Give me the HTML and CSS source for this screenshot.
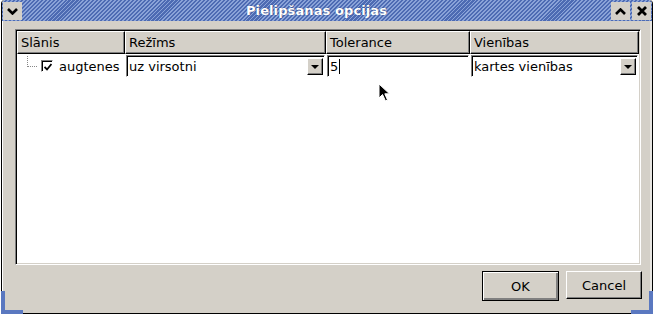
FILE: index.html
```html
<!DOCTYPE html>
<html>
  <head>
    <meta charset="utf-8" />
    <title>Pielipšanas opcijas</title>
    <link rel="stylesheet" href="styles.css">
  </head>

  <body>
    <div class="window">
      <div class="titlebar">
        <div class="tb-button">
          <svg width="11" height="7" viewBox="0 0 11 7"><path d="M1 1 L5.5 5.5 L10 1" fill="none" stroke="#000" stroke-width="2.6"/></svg>
        </div>
        <div class="title">Pielipšanas opcijas</div>
        <div class="tb-button">
          <svg width="11" height="7" viewBox="0 0 11 7"><path d="M1 6 L5.5 1.5 L10 6" fill="none" stroke="#000" stroke-width="2.6"/></svg>
        </div>
        <div class="tb-button">
          <svg width="10" height="10" viewBox="0 0 10 10"><path d="M1 1 L9 9 M9 1 L1 9" fill="none" stroke="#000" stroke-width="2.8"/></svg>
        </div>
      </div>

      <div class="content">
        <div class="table">
          <div class="header">
            <div class="hcell">Slānis</div>
            <div class="hcell">Režīms</div>
            <div class="hcell">Tolerance</div>
            <div class="hcell">Vienības</div>
          </div>
          <div class="row">
            <div class="cell layer">
              <span class="tree"></span>
              <span class="checkbox">
                <svg width="8" height="8" viewBox="0 0 8 8"><path d="M0.5 4 L3 6.5 L7.5 1" fill="none" stroke="#000" stroke-width="1.8"/></svg>
              </span>
              <span class="layer-name">augtenes</span>
            </div>
            <div class="cell">
              <div class="combo">
                <span class="combo-text">uz virsotni</span>
                <span class="drop"><span class="arrow"></span></span>
              </div>
            </div>
            <div class="cell">
              <div class="edit"><span>5</span><span class="caret"></span></div>
            </div>
            <div class="cell">
              <div class="combo">
                <span class="combo-text">kartes vienības</span>
                <span class="drop"><span class="arrow"></span></span>
              </div>
            </div>
          </div>
        </div>

        <div class="buttons">
          <button class="button default">OK</button>
          <button class="button">Cancel</button>
        </div>
      </div>

      <span class="corner corner-left"></span>
      <span class="corner corner-right"></span>
    </div>

    <svg class="pointer" width="14" height="20" viewBox="0 0 14 20">
      <path d="M1 1 L1 15 L4.5 11.5 L7.5 18 L9.5 17 L6.8 10.8 L11.5 10.8 Z" fill="#000" stroke="#fff" stroke-width="1"/>
    </svg>
  </body>
</html>
```

FILE: styles.css
```css
body {
  margin: 0;
  background-color: white;
  font-family: "DejaVu Sans", Verdana, sans-serif;
  font-size: 13px;
  color: black;
}

.window {
  position: relative;
  margin-left: 1px;
  width: 650px;
  height: 313px;
  border: 1px solid #000;
  border-top: none;
  border-radius: 4px 4px 0 0;
  background-color: #d4d0c8;
  display: flex;
  flex-direction: column;
  box-shadow: inset 1px 0 #fff, inset -2px 0 #e8e6e2;
}

.titlebar {
  height: 21px;
  display: flex;
  align-items: center;
  padding: 0 1px 0 1px;
  border-radius: 4px 4px 0 0;
  background-color: #5b79bf;
  background-image: repeating-linear-gradient(
    -45deg,
    #4d6bb3 0px,
    #4d6bb3 1.5px,
    #8aa3d8 1.5px,
    #8aa3d8 2.8px
  );
}

.tb-button {
  width: 19px;
  height: 18px;
  margin-top: 1px;
  background-color: #d4d0c8;
  display: flex;
  align-items: center;
  justify-content: center;
  flex-shrink: 0;
}

.tb-button + .tb-button {
  margin-left: 2px;
}

.title {
  flex: 1;
  text-align: center;
  color: white;
  font-weight: bold;
  font-size: 13px;
  letter-spacing: 0.1px;
  text-shadow: 0 0 1px #1d2f66;
}

.content {
  flex: 1;
  display: flex;
  flex-direction: column;
  padding: 8px 10px 0 13px;
}

.table {
  width: 622px;
  height: 232px;
  background-color: white;
  border-top: 1px solid #808080;
  border-left: 1px solid #808080;
  border-bottom: 1px solid #fff;
  border-right: 1px solid #fff;
  box-shadow: inset 1px 1px #000, inset -1px -1px #d4d0c8;
  padding: 1px;
}

.header,
.row {
  display: grid;
  grid-template-columns: 108px 201px 144px 169px;
}

.hcell {
  height: 23px;
  box-sizing: border-box;
  background-color: #d4d0c8;
  border-top: 1px solid #fff;
  border-left: 1px solid #fff;
  border-right: 1px solid #000;
  border-bottom: 1px solid #000;
  box-shadow: inset -1px -1px #808080;
  padding: 3px 0 0 3px;
  line-height: 16px;
}

.row {
  height: 23px;
}

.cell {
  display: flex;
  align-items: center;
  padding: 1px;
}

.layer {
  padding-left: 10px;
}

.tree {
  width: 9px;
  height: 10px;
  margin-top: -10px;
  border-left: 1px dotted #888;
  border-bottom: 1px dotted #888;
}

.checkbox {
  width: 12px;
  height: 12px;
  box-sizing: border-box;
  margin-left: 4px;
  border-top: 1px solid #808080;
  border-left: 1px solid #808080;
  border-bottom: 1px solid #fff;
  border-right: 1px solid #fff;
  box-shadow: inset 1px 1px #000;
  background-color: white;
  display: flex;
  align-items: center;
  justify-content: center;
  padding: 1px 0 0 1px;
}

.layer-name {
  margin-left: 6px;
}

.combo,
.edit {
  flex: 1;
  height: 22px;
  box-sizing: border-box;
  display: flex;
  align-items: center;
  background-color: white;
  border-top: 1px solid #808080;
  border-left: 1px solid #808080;
  border-bottom: 1px solid #fff;
  border-right: 1px solid #fff;
  box-shadow: inset 1px 1px #000;
}

.combo-text {
  flex: 1;
  padding-left: 2px;
}

.edit {
  padding-left: 2px;
}

.caret {
  width: 1px;
  height: 15px;
  margin-left: 1px;
  background-color: #000;
}

.drop {
  width: 16px;
  height: 17px;
  box-sizing: border-box;
  margin-right: 1px;
  margin-top: 1px;
  background-color: #d4d0c8;
  border-top: 1px solid #fff;
  border-left: 1px solid #fff;
  border-right: 1px solid #000;
  border-bottom: 1px solid #000;
  box-shadow: inset -1px -1px #808080;
  display: flex;
  align-items: center;
  justify-content: center;
}

.arrow {
  width: 0;
  height: 0;
  border-left: 4px solid transparent;
  border-right: 4px solid transparent;
  border-top: 4px solid #000;
  margin-top: 1px;
}

.buttons {
  display: flex;
  justify-content: flex-end;
  gap: 7px;
  margin-top: 6px;
}

.button {
  width: 76px;
  height: 28px;
  margin: 0;
  background-color: #d4d0c8;
  font-family: "DejaVu Sans", Verdana, sans-serif;
  font-size: 13px;
  color: black;
  border-top: 1px solid #fff;
  border-left: 1px solid #fff;
  border-right: 1px solid #000;
  border-bottom: 1px solid #000;
  box-shadow: inset -1px -1px #808080;
  padding: 0;
}

.button.default {
  width: 77px;
  height: 30px;
  border: 1px solid #000;
  box-shadow: inset 1px 1px #fff, inset -2px -2px #808080;
}

.corner {
  position: absolute;
  bottom: -1px;
  width: 18px;
  height: 19px;
  border-bottom: 4px solid #5a78c0;
}

.corner-left {
  left: -1px;
  border-left: 4px solid #5a78c0;
}

.corner-right {
  right: -1px;
  border-right: 4px solid #5a78c0;
}

.pointer {
  position: absolute;
  left: 378px;
  top: 83px;
}
```
